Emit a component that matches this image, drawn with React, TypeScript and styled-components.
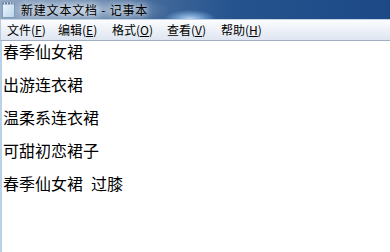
import React from "react";
import styled, { createGlobalStyle } from "styled-components";

const Global = createGlobalStyle`
  html, body { margin: 0; padding: 0; background: #ffffff; }
  body { width: 390px; height: 252px; overflow: hidden; }
`;

const Window = styled.div`
  width: 390px;
  height: 252px;
  display: flex;
  flex-direction: column;
  background: #ffffff;
  font-family: "Noto Sans CJK SC", "Noto Sans", sans-serif;
`;

const TitleBar = styled.div`
  position: relative;
  height: 19px;
  display: flex;
  align-items: center;
  gap: 6px;
  padding-left: 2px;
  background:
    radial-gradient(ellipse 26px 9px at 190px 19px, rgba(190, 220, 250, 0.95), rgba(150, 195, 240, 0.5) 55%, rgba(80, 130, 190, 0) 100%),
    radial-gradient(ellipse 90px 16px at 80px 10px, rgba(200, 214, 230, 0.75), rgba(160, 180, 205, 0.35) 60%, rgba(60, 100, 150, 0) 100%),
    linear-gradient(to right, #94a9c1 0%, #7391b3 12%, #42699a 40%, #24538e 60%, #1d4a86 100%);
  border-bottom: 1px solid #c3d2e4;
`;

const TitleText = styled.span`
  font-size: 12px;
  line-height: 19px;
  color: #000000;
  letter-spacing: 0.8px;
  text-shadow: 0 0 6px rgba(255, 255, 255, 0.9), 0 0 10px rgba(255, 255, 255, 0.7);
`;

const MenuBar = styled.div`
  height: 20px;
  display: flex;
  align-items: center;
  padding-left: 0;
  background: linear-gradient(to bottom, #fbfcfe 0%, #eef2f8 45%, #dfe6f1 100%);
  border-bottom: 1px solid #a0aec2;
  border-left: 1px solid #b9c8da;
`;

const MenuItem = styled.span`
  font-size: 12px;
  line-height: 20px;
  color: #000000;
  padding: 0 6px;
  width: ${(p: { w: number }) => p.w}px;
  box-sizing: border-box;
  white-space: nowrap;
`;

const Key = styled.span`
  text-decoration: underline;
  text-underline-offset: 1px;
`;

const Editor = styled.div`
  flex: 1;
  border-left: 2px solid #b8d2e8;
  padding: 0 0 0 1px;
  display: flex;
  flex-direction: column;
`;

const Line = styled.div`
  font-size: 16px;
  line-height: 20px;
  height: 20px;
  margin-bottom: 13px;
  color: #000000;
  white-space: pre;
  word-spacing: 4.5px;
`;

const NoteIcon = () => (
  <svg width="13" height="16" viewBox="0 0 13 16">
    <defs>
      <linearGradient id="pg" x1="0" y1="0" x2="1" y2="1">
        <stop offset="0" stopColor="#eef6fc" />
        <stop offset="1" stopColor="#b9d3ea" />
      </linearGradient>
    </defs>
    <rect x="0.5" y="1.5" width="12" height="14" fill="url(#pg)" stroke="#7e9bb8" />
    <rect x="0.5" y="0.5" width="12" height="2" fill="#5f7f9f" />
    <g stroke="#dfe9f3" strokeWidth="1">
      <line x1="2.5" y1="0.5" x2="2.5" y2="2.5" />
      <line x1="5.5" y1="0.5" x2="5.5" y2="2.5" />
      <line x1="8.5" y1="0.5" x2="8.5" y2="2.5" />
      <line x1="11" y1="0.5" x2="11" y2="2.5" />
    </g>
  </svg>
);

const menus: { label: string; key: string; w: number }[] = [
  { label: "文件", key: "F", w: 51 },
  { label: "编辑", key: "E", w: 54 },
  { label: "格式", key: "O", w: 55 },
  { label: "查看", key: "V", w: 54 },
  { label: "帮助", key: "H", w: 56 },
];

const lines = ["春季仙女裙", "出游连衣裙", "温柔系连衣裙", "可甜初恋裙子", "春季仙女裙 过膝"];

export default function App() {
  return (
    <Window>
      <Global />
      <TitleBar>
        <NoteIcon />
        <TitleText>新建文本文档 - 记事本</TitleText>
      </TitleBar>
      <MenuBar>
        {menus.map((m) => (
          <MenuItem key={m.key} w={m.w}>
            {m.label}(<Key>{m.key}</Key>)
          </MenuItem>
        ))}
      </MenuBar>
      <Editor>
        {lines.map((l, i) => (
          <Line key={i}>{l}</Line>
        ))}
      </Editor>
    </Window>
  );
}
